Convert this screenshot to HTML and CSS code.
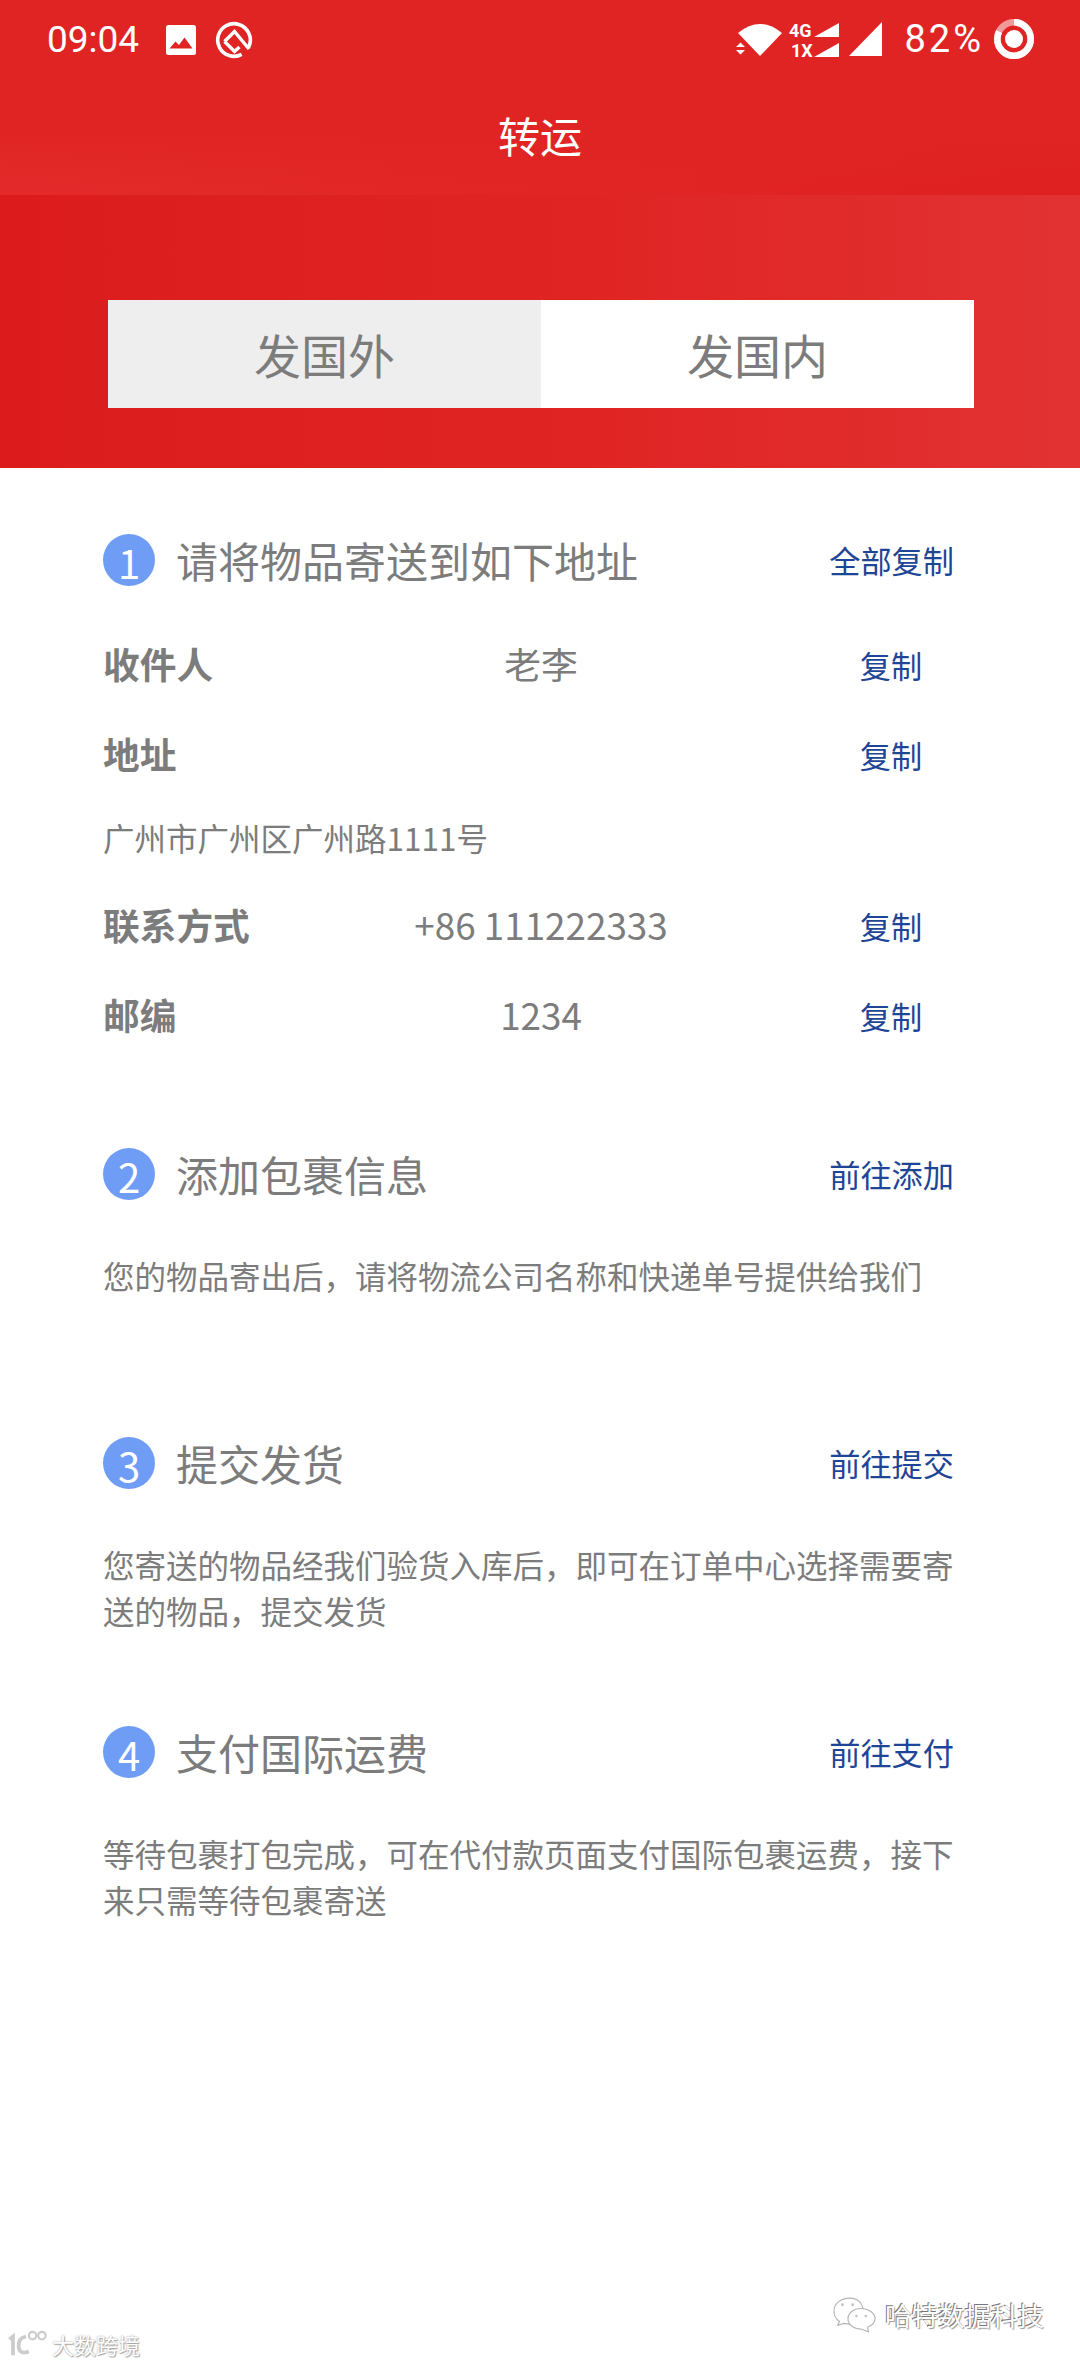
FILE: index.html
```html
<!DOCTYPE html>
<html lang="zh-CN">
<head>
<meta charset="utf-8">
<title>转运</title>
<link rel="stylesheet" href="styles.css">
</head>
<body>
<div class="page">
  <header class="top">
    <div class="status">
      <div class="status-left">
        <span class="time">09:04</span>
        <svg class="ic-image" viewBox="0 0 30 30"><rect width="30" height="30" rx="2.5" fill="#fff"/><path d="M3.5 23.5 L9.5 16.5 L13 20 L18.5 12.5 L26.5 23.5 Z" fill="#e02424"/></svg>
        <svg class="ic-q" viewBox="0 0 38 38"><circle cx="19" cy="19" r="16.3" fill="none" stroke="#fff" stroke-width="3.6" stroke-dasharray="92 11" transform="rotate(62 19 19)"/><path d="M9.5 20.5 L19.5 10.5 L34 28 M9.5 20.5 L19.5 30.5 L24.5 26" fill="none" stroke="#fff" stroke-width="3.4"/></svg>
      </div>
      <div class="status-right">
        <svg class="ic-wifi" viewBox="0 0 48 36"><path d="M2 12 Q24 -6 46 12 L24 35 Z" fill="#fff"/><path d="M0 26 L4.5 21.5 L9 26 Z M0 29 L9 29 L4.5 33.5 Z" fill="#fff"/></svg>
        <svg class="ic-net" viewBox="0 0 52 40"><text x="1" y="18" class="net-text">4G</text><text x="3" y="38" class="net-text">1X</text><path d="M26 18 L51 4 L51 18 Z M26 38 L51 24 L51 38 Z" fill="#fff"/></svg>
        <svg class="ic-signal" viewBox="0 0 33 34"><path d="M0 34 L33 0 L33 34 Z" fill="#fff"/></svg>
        <span class="battery-text">82%</span>
        <svg class="ic-battery" viewBox="0 0 40 40"><circle cx="20" cy="20" r="16.7" fill="none" stroke="#f29a9a" stroke-width="6.6"/><circle cx="20" cy="20" r="16.7" fill="none" stroke="#fff" stroke-width="6.6" stroke-dasharray="86 105" transform="rotate(-90 20 20)"/><circle cx="20" cy="20" r="9" fill="#fff"/></svg>
      </div>
    </div>
    <h1 class="title">转运</h1>
  </header>

  <section class="hero">
    <div class="tabs">
      <div class="tab tab-active">发国外</div>
      <div class="tab">发国内</div>
    </div>
  </section>

  <main class="content">
    <section class="step step-first">
      <div class="step-head">
        <span class="num">1</span>
        <h2 class="step-title">请将物品寄送到如下地址</h2>
        <a class="link">全部复制</a>
      </div>
      <div class="rows">
        <div class="row"><span class="label">收件人</span><span class="value">老李</span><a class="link copy">复制</a></div>
        <div class="row"><span class="label">地址</span><span class="value"></span><a class="link copy">复制</a></div>
        <p class="address">广州市广州区广州路1111号</p>
        <div class="row"><span class="label">联系方式</span><span class="value">+86 111222333</span><a class="link copy">复制</a></div>
        <div class="row"><span class="label">邮编</span><span class="value">1234</span><a class="link copy">复制</a></div>
      </div>
    </section>

    <section class="step">
      <div class="step-head">
        <span class="num">2</span>
        <h2 class="step-title">添加包裹信息</h2>
        <a class="link">前往添加</a>
      </div>
      <p class="desc">您的物品寄出后，请将物流公司名称和快递单号提供给我们</p>
    </section>

    <section class="step">
      <div class="step-head">
        <span class="num">3</span>
        <h2 class="step-title">提交发货</h2>
        <a class="link">前往提交</a>
      </div>
      <p class="desc">您寄送的物品经我们验货入库后，即可在订单中心选择需要寄送的物品，提交发货</p>
    </section>

    <section class="step">
      <div class="step-head">
        <span class="num">4</span>
        <h2 class="step-title">支付国际运费</h2>
        <a class="link">前往支付</a>
      </div>
      <p class="desc">等待包裹打包完成，可在代付款页面支付国际包裹运费，接下来只需等待包裹寄送</p>
    </section>
  </main>

  <div class="mark-left">
    <svg class="mark-logo" viewBox="0 0 44 30"><g fill="none" stroke="#cccccc" stroke-width="4"><path d="M3 10 L7 7 L7 27"/><path d="M21 7 Q12 9 13 18 Q14 27 24 23"/><circle cx="28" cy="6" r="4" stroke-width="2.4"/><circle cx="38" cy="6" r="4" stroke-width="2.4"/></g></svg>
    <span class="mark-left-text">大数跨境</span>
  </div>
  <div class="mark-right">
    <svg class="mark-chat" viewBox="0 0 46 40"><g fill="#fff" stroke="#b5b5b5" stroke-width="1.2"><path d="M18 2 C8 2 1 8 1 16 C1 21 4 25 7 27 L5 31 L12 29 C16 30 20 30 24 29 C34 27 35 20 31 10 C29 5 24 2 18 2 Z"/><path d="M30 13 C22 13 16 18 16 24 C16 30 22 35 30 35 L38 38 L37 33 C42 31 45 28 45 24 C45 18 38 13 30 13 Z"/></g><g fill="#c4c4c4"><circle cx="10" cy="9" r="1.6"/><circle cx="21" cy="9" r="1.6"/><circle cx="25" cy="21" r="1.4"/><circle cx="35" cy="21" r="1.4"/></g></svg>
    <span class="mark-right-text">哈特数据科技</span>
  </div>
</div>
</body>
</html>
```

FILE: styles.css
```css
* { box-sizing: border-box; }

html, body {
  margin: 0;
  padding: 0;
  background: #fff;
}

.page {
  position: relative;
  width: 1080px;
  height: 2365px;
  overflow: hidden;
  font-family: "Noto Sans CJK SC", "Noto Sans", sans-serif;
  color: #7c7c7c;
}

.top {
  height: 195px;
  background:
    linear-gradient(180deg, #e02424 65%, rgba(224, 36, 36, 0) 100%),
    linear-gradient(90deg, #e42a2a 0%, #df2020 100%);
  color: #fff;
}

.status {
  height: 78px;
  padding: 0 46px 0 47px;
  display: flex;
  justify-content: space-between;
  align-items: center;
  font-family: Roboto, "Liberation Sans", sans-serif;
}

.status-left,
.status-right {
  display: flex;
  align-items: center;
}

.status-left { padding-top: 2px; }

.time {
  font-size: 37px;
  line-height: 40px;
  font-weight: 400;
  margin-right: 27px;
}

.ic-image { width: 30px; height: 30px; margin-right: 19px; }
.ic-q { width: 38px; height: 38px; }
.ic-wifi { width: 48px; height: 36px; margin-right: 4px; }
.ic-net { width: 52px; height: 40px; margin-right: 9px; overflow: visible; }
.ic-signal { width: 33px; height: 34px; margin-right: 22px; }
.ic-battery { width: 40px; height: 40px; margin-left: 10px; }

.net-text {
  font-family: Roboto, "Liberation Sans", sans-serif;
  font-size: 18px;
  font-weight: 700;
  fill: #fff;
}

.battery-text {
  font-size: 38px;
  line-height: 40px;
  letter-spacing: 3px;
  font-weight: 400;
}

.title {
  margin: 0;
  height: 117px;
  line-height: 113px;
  text-align: center;
  font-size: 42px;
  font-weight: 400;
}

.hero {
  height: 273px;
  padding: 105px 106px 60px 108px;
  background: linear-gradient(90deg, #dc1c1c 0%, #e02424 55%, #e23232 100%);
}

.tabs {
  display: flex;
  height: 108px;
}

.tab {
  flex: 1;
  background: #fff;
  text-align: center;
  font-size: 47px;
  line-height: 108px;
  font-weight: 400;
}

.tab-active { background: #eeeeee; }

.content {
  padding: 66px 101px 0 103px;
}

.step { margin-top: 90px; }
.step-first { margin-top: 0; }
.step-first + .step { margin-top: 87px; }

.step-head {
  display: flex;
  align-items: center;
  height: 52px;
  padding-right: 25px;
}

.num {
  width: 52px;
  height: 52px;
  flex: none;
  border-radius: 50%;
  background: #6f9df6;
  color: #fff;
  text-align: center;
  font-size: 40px;
  line-height: 56px;
  font-weight: 400;
}

.step-title {
  flex: 1;
  margin: 0 0 0 21px;
  font-size: 42px;
  line-height: 52px;
  font-weight: 400;
}

.link {
  color: #1f4596;
  font-size: 31.2px;
  line-height: 46px;
  font-weight: 400;
}

.rows { padding-top: 34px; }

.row {
  display: grid;
  grid-template-columns: 176px 1fr 176px;
  align-items: center;
  height: 90px;
}

.label {
  font-size: 36.7px;
  font-weight: 700;
  padding-bottom: 4px;
}

.value {
  text-align: center;
  font-size: 36.8px;
  font-weight: 400;
  padding-bottom: 4px;
}

.copy { text-align: center; }

.address {
  margin: 0;
  height: 81px;
  font-size: 31.5px;
  line-height: 75px;
  font-weight: 400;
}

.desc {
  margin: 52px 0 0;
  min-height: 95px;
  font-size: 31.5px;
  line-height: 46px;
  font-weight: 400;
}

.mark-left {
  position: absolute;
  left: 6px;
  top: 2329px;
  display: flex;
  align-items: center;
  gap: 4px;
}

.mark-logo { width: 42px; height: 28px; }

.mark-left-text {
  font-size: 22px;
  line-height: 30px;
  color: #fff;
  text-shadow: 0 0 2px #999, 1px 1px 1px #aaa;
}

.mark-right {
  position: absolute;
  left: 833px;
  top: 2295px;
  display: flex;
  align-items: center;
  gap: 9px;
}

.mark-chat { width: 43px; height: 38px; }

.mark-right-text {
  font-size: 26.5px;
  line-height: 40px;
  color: #fff;
  text-shadow: -1px -1px 0 #777, 1px 1px 1px #999;
}
```
